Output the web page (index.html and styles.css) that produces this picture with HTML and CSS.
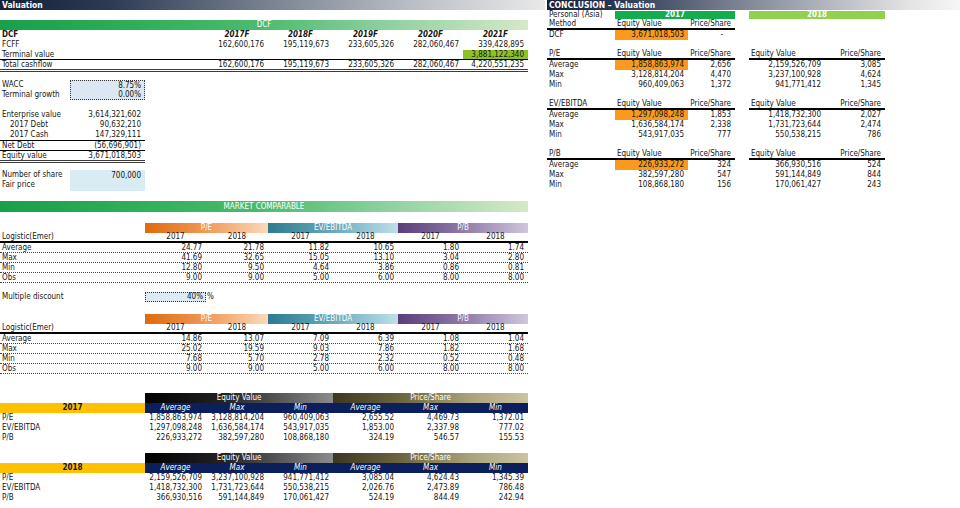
FILE: index.html
```html
<!DOCTYPE html>
<html>
<head>
<meta charset="utf-8">
<title>Valuation</title>
<link rel="stylesheet" href="styles.css">
</head>
<body>
<div class="sheet">
  <section class="left">
    <div class="title">Valuation</div>
    <div class="sp h10"></div>
    <div class="band">DCF</div>
    <div class="g"><span class="c s3 b">DCF</span><span class="c yr">2017F</span><span class="c yr">2018F</span><span class="c yr">2019F</span><span class="c yr">2020F</span><span class="c yr">2021F</span></div>
    <div class="g"><span class="c s3">FCFF</span><span class="c n">162,600,176</span><span class="c n">195,119,673</span><span class="c n">233,605,326</span><span class="c n">282,060,467</span><span class="c n">339,428,895</span></div>
    <div class="g bb1"><span class="c s3">Terminal value</span><span class="c s4"></span><span class="c n lime">3,881,122,340</span></div>
    <div class="g tot"><span class="c s3">Total cashflow</span><span class="c n">162,600,176</span><span class="c n">195,119,673</span><span class="c n">233,605,326</span><span class="c n">282,060,467</span><span class="c n">4,220,551,235</span></div>
    <div class="sp h8"></div>
    <div class="kv">
      <span class="c k1">WACC</span>
      <div class="box dotted"><span>8.75%</span><span>0.00%</span></div>
      <span class="c k1">Terminal growth</span>
    </div>
    <div class="sp h10"></div>
    <div class="p"><span class="c">Enterprise value</span><span class="c n">3,614,321,602</span></div>
    <div class="p"><span class="c in">2017 Debt</span><span class="c n">90,632,210</span></div>
    <div class="p"><span class="c in">2017 Cash</span><span class="c n">147,329,111</span></div>
    <div class="p bt1"><span class="c">Net Debt</span><span class="c n">(56,696,901)</span></div>
    <div class="p eq"><span class="c">Equity value</span><span class="c n">3,671,018,503</span></div>
    <div class="sp h7"></div>
    <div class="kv">
      <span class="c k1">Number of share</span>
      <div class="box plain"><span>700,000</span><span></span></div>
      <span class="c k1">Fair price</span>
    </div>
    <div class="sp h11"></div>
    <div class="band mc">MARKET COMPARABLE</div>
    <div class="sp h11"></div>

    <div class="g"><span class="c s2"></span><span class="c s2 hd pe">P/E</span><span class="c s2 hd ev">EV/EBITDA</span><span class="c s2 hd pb">P/B</span></div>
    <div class="g yrs"><span class="c s2">Logistic(Emer)</span><span class="c m">2017</span><span class="c m">2018</span><span class="c m">2017</span><span class="c m">2018</span><span class="c m">2017</span><span class="c m">2018</span></div>
    <div class="g dr"><span class="c s2">Average</span><span class="c n">24.77</span><span class="c n">21.78</span><span class="c n">11.82</span><span class="c n">10.65</span><span class="c n">1.80</span><span class="c n">1.74</span></div>
    <div class="g dr"><span class="c s2">Max</span><span class="c n">41.69</span><span class="c n">32.65</span><span class="c n">15.05</span><span class="c n">13.10</span><span class="c n">3.04</span><span class="c n">2.80</span></div>
    <div class="g dr"><span class="c s2">Min</span><span class="c n">12.80</span><span class="c n">9.50</span><span class="c n">4.64</span><span class="c n">3.86</span><span class="c n">0.86</span><span class="c n">0.81</span></div>
    <div class="g dr"><span class="c s2">Obs</span><span class="c n">9.00</span><span class="c n">9.00</span><span class="c n">5.00</span><span class="c n">6.00</span><span class="c n">8.00</span><span class="c n">8.00</span></div>
    <div class="sp h9"></div>
    <div class="g"><span class="c s2">Multiple discount</span><span class="c n disc">40%</span><span class="c pct">%</span></div>
    <div class="sp h12"></div>

    <div class="g"><span class="c s2"></span><span class="c s2 hd pe">P/E</span><span class="c s2 hd ev">EV/EBITDA</span><span class="c s2 hd pb">P/B</span></div>
    <div class="g yrs"><span class="c s2">Logistic(Emer)</span><span class="c m">2017</span><span class="c m">2018</span><span class="c m">2017</span><span class="c m">2018</span><span class="c m">2017</span><span class="c m">2018</span></div>
    <div class="g dr"><span class="c s2">Average</span><span class="c n">14.86</span><span class="c n">13.07</span><span class="c n">7.09</span><span class="c n">6.39</span><span class="c n">1.08</span><span class="c n">1.04</span></div>
    <div class="g dr"><span class="c s2">Max</span><span class="c n">25.02</span><span class="c n">19.59</span><span class="c n">9.03</span><span class="c n">7.86</span><span class="c n">1.82</span><span class="c n">1.68</span></div>
    <div class="g dr"><span class="c s2">Min</span><span class="c n">7.68</span><span class="c n">5.70</span><span class="c n">2.78</span><span class="c n">2.32</span><span class="c n">0.52</span><span class="c n">0.48</span></div>
    <div class="g dr"><span class="c s2">Obs</span><span class="c n">9.00</span><span class="c n">9.00</span><span class="c n">5.00</span><span class="c n">6.00</span><span class="c n">8.00</span><span class="c n">8.00</span></div>
    <div class="sp h19"></div>

    <div class="g"><span class="c s2"></span><span class="c s3 hd eqv">Equity Value</span><span class="c s3 hd ps">Price/Share</span></div>
    <div class="g"><span class="c s2 yel">2017</span><span class="c nv">Average</span><span class="c nv">Max</span><span class="c nv">Min</span><span class="c nv">Average</span><span class="c nv">Max</span><span class="c nv">Min</span></div>
    <div class="g"><span class="c s2">P/E</span><span class="c n">1,858,863,974</span><span class="c n">3,128,814,204</span><span class="c n">960,409,063</span><span class="c n">2,655.52</span><span class="c n">4,469.73</span><span class="c n">1,372.01</span></div>
    <div class="g"><span class="c s2">EV/EBITDA</span><span class="c n">1,297,098,248</span><span class="c n">1,636,584,174</span><span class="c n">543,917,035</span><span class="c n">1,853.00</span><span class="c n">2,337.98</span><span class="c n">777.02</span></div>
    <div class="g"><span class="c s2">P/B</span><span class="c n">226,933,272</span><span class="c n">382,597,280</span><span class="c n">108,868,180</span><span class="c n">324.19</span><span class="c n">546.57</span><span class="c n">155.53</span></div>
    <div class="sp h10"></div>
    <div class="g"><span class="c s2"></span><span class="c s3 hd eqv">Equity Value</span><span class="c s3 hd ps">Price/Share</span></div>
    <div class="g"><span class="c s2 yel">2018</span><span class="c nv">Average</span><span class="c nv">Max</span><span class="c nv">Min</span><span class="c nv">Average</span><span class="c nv">Max</span><span class="c nv">Min</span></div>
    <div class="g"><span class="c s2">P/E</span><span class="c n">2,159,526,709</span><span class="c n">3,237,100,928</span><span class="c n">941,771,412</span><span class="c n">3,085.04</span><span class="c n">4,624.43</span><span class="c n">1,345.39</span></div>
    <div class="g"><span class="c s2">EV/EBITDA</span><span class="c n">1,418,732,300</span><span class="c n">1,731,723,644</span><span class="c n">550,538,215</span><span class="c n">2,026.76</span><span class="c n">2,473.89</span><span class="c n">786.48</span></div>
    <div class="g"><span class="c s2">P/B</span><span class="c n">366,930,516</span><span class="c n">591,144,849</span><span class="c n">170,061,427</span><span class="c n">524.19</span><span class="c n">844.49</span><span class="c n">242.94</span></div>
  </section>

  <section class="right">
    <div class="title">CONCLUSION – Valuation</div>
    <div class="rg"><span class="c">Personal (Asia)</span><span class="c s2 y17">2017</span><span class="c"></span><span class="c s2 y18">2018</span></div>
    <div class="rg"><span class="c ul">Method</span><span class="c ul">Equity Value</span><span class="c n ul">Price/Share</span><span class="c"></span><span class="c s2"></span></div>
    <div class="rg"><span class="c">DCF</span><span class="c n org">3,671,018,503</span><span class="c n dash">-</span></div>
    <div class="sp h10"></div>
    <div class="rg"><span class="c ul">P/E</span><span class="c ul">Equity Value</span><span class="c n ul">Price/Share</span><span class="c"></span><span class="c ul">Equity Value</span><span class="c n ul">Price/Share</span></div>
    <div class="rg"><span class="c">Average</span><span class="c n org">1,858,863,974</span><span class="c n">2,656</span><span class="c"></span><span class="c n">2,159,526,709</span><span class="c n">3,085</span></div>
    <div class="rg"><span class="c">Max</span><span class="c n">3,128,814,204</span><span class="c n">4,470</span><span class="c"></span><span class="c n">3,237,100,928</span><span class="c n">4,624</span></div>
    <div class="rg"><span class="c">Min</span><span class="c n">960,409,063</span><span class="c n">1,372</span><span class="c"></span><span class="c n">941,771,412</span><span class="c n">1,345</span></div>
    <div class="sp h10"></div>
    <div class="rg"><span class="c ul">EV/EBITDA</span><span class="c ul">Equity Value</span><span class="c n ul">Price/Share</span><span class="c"></span><span class="c ul">Equity Value</span><span class="c n ul">Price/Share</span></div>
    <div class="rg"><span class="c">Average</span><span class="c n org">1,297,098,248</span><span class="c n">1,853</span><span class="c"></span><span class="c n">1,418,732,300</span><span class="c n">2,027</span></div>
    <div class="rg"><span class="c">Max</span><span class="c n">1,636,584,174</span><span class="c n">2,338</span><span class="c"></span><span class="c n">1,731,723,644</span><span class="c n">2,474</span></div>
    <div class="rg"><span class="c">Min</span><span class="c n">543,917,035</span><span class="c n">777</span><span class="c"></span><span class="c n">550,538,215</span><span class="c n">786</span></div>
    <div class="sp h10"></div>
    <div class="rg"><span class="c ul">P/B</span><span class="c ul">Equity Value</span><span class="c n ul">Price/Share</span><span class="c"></span><span class="c ul">Equity Value</span><span class="c n ul">Price/Share</span></div>
    <div class="rg"><span class="c">Average</span><span class="c n org">226,933,272</span><span class="c n">324</span><span class="c"></span><span class="c n">366,930,516</span><span class="c n">524</span></div>
    <div class="rg"><span class="c">Max</span><span class="c n">382,597,280</span><span class="c n">547</span><span class="c"></span><span class="c n">591,144,849</span><span class="c n">844</span></div>
    <div class="rg"><span class="c">Min</span><span class="c n">108,868,180</span><span class="c n">156</span><span class="c"></span><span class="c n">170,061,427</span><span class="c n">243</span></div>
  </section>
</div>
</body>
</html>
```

FILE: styles.css
```css
html, body {
  margin: 0;
  padding: 0;
  background: #ffffff;
}
body {
  width: 960px;
  height: 508px;
  overflow: hidden;
  font-family: "DejaVu Sans Condensed", "DejaVu Sans", sans-serif;
  font-size: 8px;
  color: #161616;
}
.sheet {
  display: flex;
  align-items: flex-start;
}
.left {
  width: 547px;
  display: flex;
  flex-direction: column;
}
.right {
  width: 413px;
  display: flex;
  flex-direction: column;
}
.title {
  height: 10px;
  line-height: 10px;
  font-weight: bold;
  color: #ffffff;
  padding-left: 2px;
  font-size: 8.5px;
}
.left .title {
  width: 543px;
  background: linear-gradient(90deg, #14203a 0%, #2c3a55 20%, #6f7889 45%, #b9bdc4 75%, #e9e9e9 100%);
}
.right .title {
  background: linear-gradient(90deg, #14203a 0%, #2c3a55 18%, #707989 42%, #b8bcc3 70%, #e4e4e4 88%, #f6f6f6 100%);
}
.sp { width: 1px; }
.h7 { height: 7px; }
.h8 { height: 8px; }
.h9 { height: 9px; }
.h10 { height: 10px; }
.h11 { height: 11px; }
.h12 { height: 12px; }
.h19 { height: 19px; }

.band {
  width: 528px;
  height: 10px;
  line-height: 10px;
  text-align: center;
  color: #ffffff;
  background: linear-gradient(90deg, #17a04a 0%, #2eae58 25%, #4cbc6e 50%, #93d2a3 75%, #d5e9c9 100%);
}
.band.mc { height: 11px; line-height: 11px; }

.g {
  display: grid;
  grid-template-columns: 70px 75px 61px 62px 65px 65px 65px 65px;
  width: 528px;
  height: 10px;
  line-height: 10px;
  box-sizing: border-box;
}
.c {
  white-space: nowrap;
  padding: 0 2px;
  overflow: visible;
}
.n { text-align: right; padding-right: 4px; }
.m { text-align: center; }
.b { font-weight: bold; }
.s2 { grid-column: span 2; }
.s3 { grid-column: span 3; }
.s4 { grid-column: span 4; }
.yr {
  text-align: center;
  font-weight: bold;
  font-style: italic;
}
.lime { background: #8fc126; }
.bb1 {
  border-bottom: 1px solid #000000;
  line-height: 9px;
}
.tot {
  height: 12px;
  line-height: 9px;
  border-bottom: 3px double #3a3a3a;
}

.kv {
  display: grid;
  grid-template-columns: 70px 75px;
  grid-template-rows: 10px 10px;
  line-height: 10px;
  width: 145px;
}
.k1 { grid-column: 1; }
.box {
  grid-column: 2;
  grid-row: 1 / 3;
  box-sizing: border-box;
  display: flex;
  flex-direction: column;
  text-align: right;
  background: #dbe7f2;
}
.box span { height: 9px; line-height: 9px; padding-right: 3px; }
.box.dotted { border: 1px dotted #333333; }
.box.plain { background: #daecf3; padding-top: 1px; height: 21px; }
.box.plain span { height: 10px; line-height: 10px; padding-right: 4px; }

.p {
  display: grid;
  grid-template-columns: 70px 75px;
  width: 145px;
  height: 10px;
  line-height: 10px;
  box-sizing: border-box;
}
.in { padding-left: 10px; }
.bt1 {
  border-top: 1px solid #000000;
  line-height: 9px;
}
.eq {
  height: 13px;
  line-height: 9px;
  border-top: 1px solid #000000;
  border-bottom: 3px double #3a3a3a;
}

.hd {
  text-align: center;
  color: #ffffff;
}
.pe { background: linear-gradient(90deg, #e06a0c 0%, #ef9a58 50%, #fcd9ba 100%); }
.ev { background: linear-gradient(90deg, #2c7b90 0%, #69a9bb 50%, #bde0ea 100%); }
.pb { background: linear-gradient(90deg, #5a3e7a 0%, #8f7aa8 50%, #d0c6df 100%); }
.yrs {
  border-bottom: 2px solid #000000;
  line-height: 8px;
}
.dr {
  border-bottom: 1px dotted #444444;
  line-height: 9px;
}
.disc {
  background: #dbeaf3;
  border: 1px dotted #333333;
  line-height: 8px;
  padding-right: 2px;
}
.pct { padding-left: 1px; }

.eqv { background: linear-gradient(90deg, #000000 0%, #262626 45%, #8c8c8c 100%); }
.ps { background: linear-gradient(90deg, #3c3720 0%, #6d6541 35%, #a8a17b 70%, #cbc4a0 100%); }
.yel {
  background: #ffc000;
  text-align: center;
  font-weight: bold;
}
.nv {
  background: #0b1f5d;
  color: #ffffff;
  font-style: italic;
  text-align: center;
}

.rg {
  display: grid;
  grid-template-columns: 68px 73px 47px 14px 76px 60px;
  width: 338px;
  height: 10px;
  line-height: 10px;
}
.rg .c { box-sizing: border-box; }
.y17 {
  background: #12ad4e;
  color: #ffffff;
  font-weight: bold;
  text-align: center;
  margin: 1px 0;
  line-height: 8px;
}
.y18 {
  background: #92d050;
  color: #ffffff;
  font-weight: bold;
  text-align: center;
  margin: 1px 0;
  line-height: 8px;
}
.ul {
  border-bottom: 2px solid #000000;
  line-height: 8px;
}
.org { background: #f99a1e; }
.dash { padding-right: 12px; }
```
